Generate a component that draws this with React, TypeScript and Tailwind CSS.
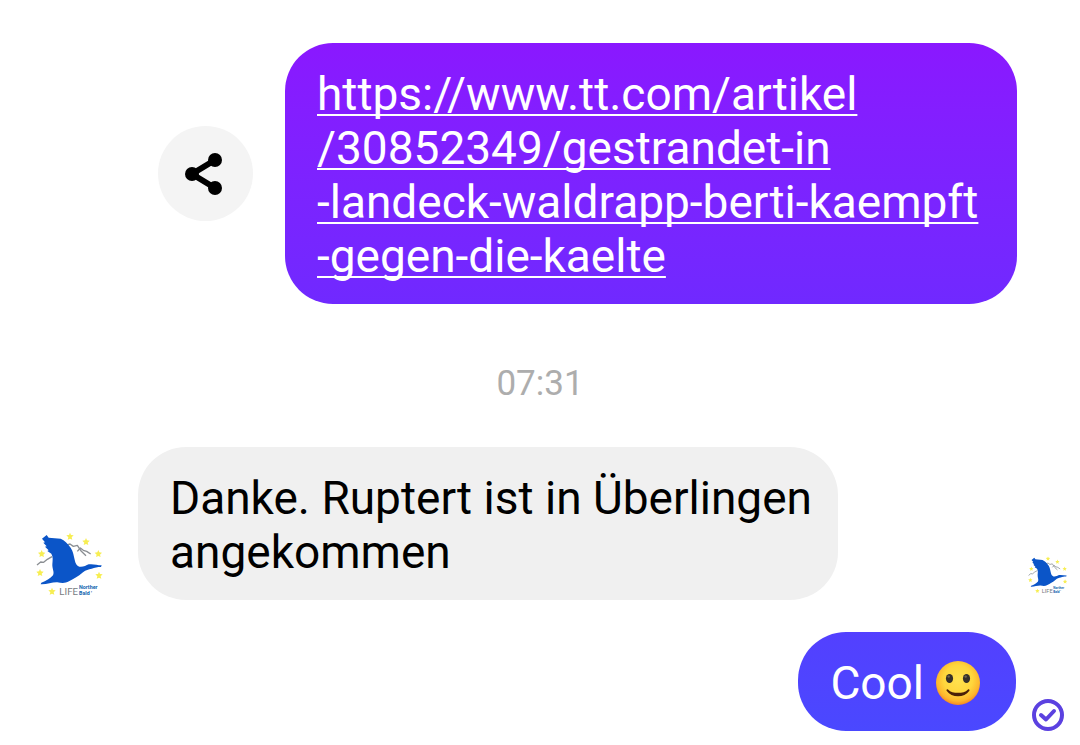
import React from 'react';

interface BubbleProps {
  className: string;
  children: React.ReactNode;
}

const STARS = [
  [150, 46],
  [198, 62],
  [235, 98],
  [237, 163],
  [65, 98],
  [60, 155],
  [96, 211],
];

function BirdLogo({ className }: { className: string }) {
  return (
    <svg viewBox="48 33 204 204" className={className} role="img" aria-label="LIFE Northern Bald Ibis">
      {STARS.map(([x, y]) => (
        <path
          key={`${x}-${y}`}
          transform={`translate(${x} ${y})`}
          d="M0-11 3-4 11-3 5 3 7 10 0 7-7 10-5 3-11-3-3-4Z"
          fill="#f7ee52"
        />
      ))}
      <g fill="none" stroke="#8b8f93" strokeWidth="4" strokeLinejoin="round">
        <path d="M51 132 62 123 71 124 82 115 96 107" />
        <path d="M136 74 150 69 160 76 172 73 184 91 198 104" />
        <path d="M172 91 181 81 190 88 200 91 212 99" />
      </g>
      <path
        d="M66 53 80 42 86 50 122 53C134 58 142 67 152 80C160 92 161 104 164 116C166 126 170 135 178 137C188 139 198 134 206 130C218 128 232 132 245 133L243 138C232 138 224 140 215 143C205 146 198 146 189 154C174 167 160 174 147 181C135 188 124 186 112 184C98 183 80 191 62 190L64 185C78 180 91 173 99 163C104 153 96 143 97 130C98 118 100 108 94 98L82 90 86 88 75 77 80 76 70 65 75 64Z"
        fill="#0b55c8"
      />
      <text x="118" y="223" fontSize="29" fill="#777b80" fontFamily="Roboto, sans-serif">
        LIFE
      </text>
      <g fontSize="16" fontWeight="700" fill="#1263ae" fontFamily="Roboto, sans-serif">
        <text x="177" y="203">Norther</text>
        <text x="177" y="223">Bald '</text>
      </g>
    </svg>
  );
}

function ShareIcon() {
  return (
    <svg viewBox="0 0 40 44" className="w-10 h-11" aria-hidden="true">
      <path d="M31 8 8 22 31 36" fill="none" stroke="black" strokeWidth="6" />
      <circle cx="31" cy="8" r="7" />
      <circle cx="8" cy="22" r="7" />
      <circle cx="31" cy="36" r="7" />
    </svg>
  );
}

function SmileEmoji() {
  return (
    <svg viewBox="0 0 44 44" className="w-11 h-11" role="img" aria-label="🙂">
      <defs>
        <radialGradient id="smile-face" cx="0.5" cy="0.42" r="0.6">
          <stop offset="0" stopColor="#ffe250" />
          <stop offset="0.55" stopColor="#ffd63c" />
          <stop offset="0.82" stopColor="#fdb52c" />
          <stop offset="1" stopColor="#f27c20" />
        </radialGradient>
      </defs>
      <circle cx="22" cy="22" r="22" fill="url(#smile-face)" />
      <ellipse cx="13.5" cy="17.5" rx="3.6" ry="4.6" fill="#36302a" />
      <ellipse cx="30.5" cy="17.5" rx="3.6" ry="4.6" fill="#36302a" />
      <circle cx="12.7" cy="15.6" r="1.2" fill="#716553" />
      <circle cx="29.7" cy="15.6" r="1.2" fill="#716553" />
      <path
        d="M12 28.4C14.5 31 18 31.8 22 31.8S29.5 31 32 28.4C33 27.6 34 28.8 33.2 30C30.8 33.6 26.6 35.2 22 35.2S13.2 33.6 10.8 30C10 28.8 11 27.6 12 28.4Z"
        fill="#4a2008"
      />
    </svg>
  );
}

function SeenIcon() {
  return (
    <svg viewBox="0 0 32 32" className="w-8 h-8" fill="none" stroke="#5b41e0" role="img" aria-label="Zugestellt">
      <circle cx="16" cy="16" r="14" strokeWidth="4" />
      <path d="M9 16 14 20.5 22 12" strokeWidth="4" strokeLinecap="round" strokeLinejoin="round" />
    </svg>
  );
}

function Bubble({ className, children }: BubbleProps) {
  return (
    <div className={`rounded-[48px] pl-8 pt-6 pb-[21px] text-[46px] leading-[54px] ${className}`}>
      {children}
    </div>
  );
}

export default function App() {
  return (
    <main className="min-h-screen bg-white pt-[43px] pb-3 font-[Roboto,sans-serif]">
      {/* Shared link */}
      <div className="flex items-center justify-end gap-8 pr-[63px]">
        <button
          type="button"
          aria-label="Teilen"
          className="w-[95px] h-[95px] shrink-0 rounded-full bg-[#f4f4f4] flex items-center justify-center pr-1"
        >
          <ShareIcon />
        </button>
        <Bubble className="w-[732px] pr-8 bg-linear-to-b from-[#8a18ff] to-[#7029ff] text-white">
          <a
            href="https://www.tt.com/artikel/30852349/gestrandet-in-landeck-waldrapp-berti-kaempft-gegen-die-kaelte"
            className="whitespace-nowrap underline decoration-2 underline-offset-4 [text-decoration-skip-ink:none]"
          >
            https://www.tt.com/artikel
            <br />
            /30852349/gestrandet-in
            <br />
            -landeck-waldrapp-berti-kaempft
            <br />
            -gegen-die-kaelte
          </a>
        </Bubble>
      </div>

      <p className="pt-14 pb-10 text-center text-[35px] leading-[47px] text-[#adadad]">
        <time>07:31</time>
      </p>

      {/* Reply */}
      <div className="flex items-end justify-between pl-9 pr-3">
        <div className="flex items-end gap-[34px]">
          <BirdLogo className="w-[68px] h-[68px] shrink-0" />
          <Bubble className="w-[700px] pr-6 bg-[#f0f0f0] text-black">
            Danke. Ruptert ist in Überlingen angekommen
          </Bubble>
        </div>
        <BirdLogo className="w-10 h-10 shrink-0 mb-1" />
      </div>

      <div className="mt-8 flex items-end justify-end gap-4 pr-4">
        <Bubble className="flex items-center gap-3 pr-9 bg-linear-to-b from-[#5340ff] to-[#4a48ff] text-white">
          Cool
          <SmileEmoji />
        </Bubble>
        <SeenIcon />
      </div>
    </main>
  );
}
